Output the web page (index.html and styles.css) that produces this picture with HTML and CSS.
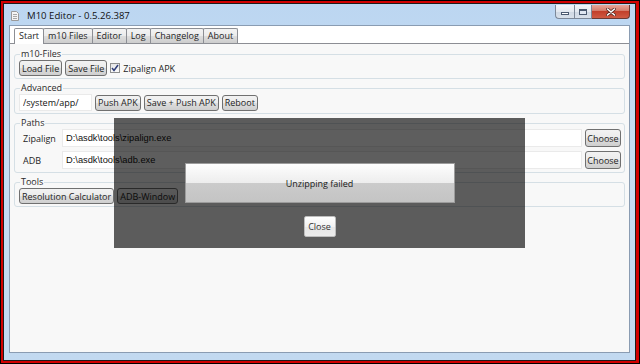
FILE: index.html
```html
<!DOCTYPE html>
<html lang="en">
<head>
    <meta charset="UTF-8">
    <meta name="viewport" content="width=device-width, initial-scale=1.0">
    <title>M10 Editor - 0.5.26.387</title>
    <link rel="stylesheet" href="styles.css">
</head>
<body>

<div class="screen">
    <div class="bezel">
        <div class="window">

            <!-- Barra de título -->
            <div class="titlebar">
                <svg class="app-icon" width="8" height="10" viewBox="0 0 8 10">
                    <path d="M0.5 0.5 H5.5 L7.5 2.5 V9.5 H0.5 Z" fill="#f4f4f4" stroke="#9a9a9a"/>
                    <path d="M2 3.5 H6 M2 5.5 H6 M2 7.5 H6" stroke="#a8a8a8"/>
                </svg>
                <span class="title">M10 Editor - 0.5.26.387</span>
                <div class="caption-buttons">
                    <span class="cap cap-min"><i></i></span>
                    <span class="cap cap-max"><i></i></span>
                    <span class="cap cap-close">
                        <svg width="10" height="8" viewBox="0 0 10 8">
                            <path d="M1.5 1 L8.5 7 M8.5 1 L1.5 7" stroke="#5b2a22" stroke-width="3" stroke-linecap="round"/>
                            <path d="M1.5 1 L8.5 7 M8.5 1 L1.5 7" stroke="#fff" stroke-width="1.6" stroke-linecap="round"/>
                        </svg>
                    </span>
                </div>
            </div>

            <div class="client">
                <div class="tabs">
                    <span class="tab active">Start</span>
                    <span class="tab">m10 Files</span>
                    <span class="tab">Editor</span>
                    <span class="tab">Log</span>
                    <span class="tab">Changelog</span>
                    <span class="tab">About</span>
                </div>

                <div class="tab-pane">
                    <fieldset class="group">
                        <legend>m10-Files</legend>
                        <div class="row">
                            <button class="btn">Load File</button>
                            <button class="btn">Save File</button>
                            <label class="check">
                                <span class="check-box">
                                    <svg width="8" height="8" viewBox="0 0 8 8">
                                        <path d="M1 4 L3 6.5 L7 1" fill="none" stroke="#2f3d78" stroke-width="1.5"/>
                                    </svg>
                                </span>
                                Zipalign APK
                            </label>
                        </div>
                    </fieldset>

                    <fieldset class="group">
                        <legend>Advanced</legend>
                        <div class="row">
                            <input class="field field-short" type="text" value="/system/app/">
                            <button class="btn">Push APK</button>
                            <button class="btn">Save + Push APK</button>
                            <button class="btn">Reboot</button>
                        </div>
                    </fieldset>

                    <fieldset class="group">
                        <legend>Paths</legend>
                        <div class="path-row">
                            <span class="path-label">Zipalign</span>
                            <input class="field field-path" type="text" value="D:\asdk\tools\zipalign.exe">
                            <button class="btn btn-choose">Choose</button>
                        </div>
                        <div class="path-row">
                            <span class="path-label">ADB</span>
                            <input class="field field-path" type="text" value="D:\asdk\tools\adb.exe">
                            <button class="btn btn-choose">Choose</button>
                        </div>
                    </fieldset>

                    <fieldset class="group">
                        <legend>Tools</legend>
                        <div class="row">
                            <button class="btn">Resolution Calculator</button>
                            <button class="btn">ADB-Window</button>
                        </div>
                    </fieldset>

                    <!-- Diálogo de error sobre el contenido -->
                    <div class="overlay">
                        <div class="message">Unzipping failed</div>
                        <button class="close-btn">Close</button>
                    </div>
                </div>
            </div>

        </div>
    </div>
</div>

</body>
</html>
```

FILE: styles.css
```css
* {
    box-sizing: border-box;
}

body {
    margin: 0;
    background: #000;
    font-family: "Open Sans", sans-serif;
    font-size: 9px;
    color: #1e1e1e;
}

/* Marco exterior */
.screen {
    width: 640px;
    height: 364px;
    border: 1px solid #000;
    background: #000;
}

.bezel {
    height: 100%;
    border: 2px solid #d20000;
    border-right-width: 3px;
}

.window {
    height: 100%;
    border: 1px solid #1c1c1c;
    background: linear-gradient(#bcd6f1, #c6ddf3 40%, #c2d9f0);
    display: flex;
    flex-direction: column;
    padding: 0 5px 7px 5px;
}

/* Barra de título */
.titlebar {
    height: 21px;
    display: flex;
    align-items: center;
    padding-left: 2px;
}

.app-icon {
    margin-top: 2px;
}

.title {
    margin-left: 8px;
    margin-top: 1px;
    font-size: 9.6px;
    color: #111;
}

.caption-buttons {
    margin-left: auto;
    align-self: flex-start;
    margin-top: 1px;
    display: flex;
    height: 14px;
}

.cap {
    display: flex;
    align-items: center;
    justify-content: center;
    height: 14px;
    border: 1px solid #7c8898;
    border-top: none;
    background: linear-gradient(#f2f5f9, #e2e8ef 50%, #cfd8e3 51%, #d9e1ea);
}

.cap-min {
    width: 19px;
    border-radius: 0 0 0 4px;
    border-right: none;
}

.cap-min i {
    width: 8px;
    height: 3px;
    margin-top: 4px;
    background: #fff;
    border: 1px solid #4b5a70;
}

.cap-max {
    width: 18px;
}

.cap-max i {
    width: 8px;
    height: 6px;
    border: 1px solid #4b5a70;
    border-top-width: 2px;
    background: #dfe7f1;
}

.cap-close {
    width: 38px;
    border-left: none;
    border-color: #6b3a33;
    border-radius: 0 0 4px 0;
    background: linear-gradient(#e8a799, #d47b69 45%, #c2402b 50%, #cf5a43);
}

/* Área de cliente */
.client {
    flex: 1;
    border: 1px solid #8a9cb2;
    background: #fff;
    display: flex;
    flex-direction: column;
}

.tabs {
    display: flex;
    align-items: flex-end;
    padding: 1px 0 0 4px;
    height: 17px;
}

.tab {
    height: 15px;
    line-height: 13px;
    padding: 0 4px;
    border: 1px solid #8c8e94;
    border-bottom: none;
    margin-right: -1px;
    border-radius: 2px 2px 0 0;
    background: linear-gradient(#f3f3f3, #ebebeb 50%, #dddddd 51%, #cdcdcd);
}

.tab.active {
    background: #fff;
    height: 16px;
    position: relative;
    z-index: 1;
    margin-bottom: -1px;
}

.tab-pane {
    flex: 1;
    position: relative;
    background: #f8f8f8;
    border-top: 1px solid #8c8e94;
    padding: 4px 4px 0 4px;
}

/* Grupos */
.group {
    margin: 0 0 3px 0;
    padding: 0 3px 2px 4px;
    border: 1px solid #d5dfe5;
    border-radius: 3px;
    min-width: 0;
}

.group legend {
    padding: 0 1px;
    margin-left: 1px;
    line-height: 12px;
    color: #2a2a2a;
}

.row {
    display: flex;
    align-items: center;
    gap: 3px;
}

.btn {
    height: 16px;
    padding: 0 2px;
    border: 1px solid #707070;
    border-radius: 3px;
    font-family: "Open Sans", sans-serif;
    font-size: 9px;
    line-height: 13px;
    color: #1e1e1e;
    background: linear-gradient(#f2f2f2, #ebebeb 50%, #dddddd 51%, #cfcfcf);
}

.check {
    display: flex;
    align-items: center;
    gap: 3px;
}

.check-box {
    width: 10px;
    height: 10px;
    border: 1px solid #8e8f8f;
    background: linear-gradient(#e6e6e6, #fafafa);
    display: flex;
    align-items: center;
    justify-content: center;
}

.field {
    height: 17px;
    border: 1px solid #eaeaea;
    background: #fff;
    padding: 0 3px;
    font-family: "Liberation Sans", sans-serif;
    font-size: 9.3px;
    color: #111;
    outline: none;
}

.field-short {
    width: 73px;
    font-family: "Open Sans", sans-serif;
    font-size: 9px;
}

.path-row {
    display: flex;
    align-items: center;
    margin-bottom: 4px;
}

.path-row:last-child {
    margin-bottom: 1px;
}

.path-label {
    width: 43px;
    padding-left: 4px;
}

.field-path {
    flex: 1;
    height: 18px;
}

.btn-choose {
    height: 18px;
    width: 36px;
    padding: 0;
    margin-left: 3px;
}

/* Diálogo */
.overlay {
    position: absolute;
    left: 104px;
    top: 74px;
    width: 411px;
    height: 130px;
    background: rgba(0, 0, 0, 0.63);
    display: flex;
    flex-direction: column;
    align-items: center;
}

.message {
    margin-top: 45px;
    width: 270px;
    height: 40px;
    border: 1px solid #9c9c9c;
    background: linear-gradient(#fdfdfd, #ededed 50%, #cbcbcb 51%, #c4c4c4);
    display: flex;
    align-items: center;
    justify-content: center;
    color: #1a1a1a;
}

.close-btn {
    margin-top: 13px;
    width: 32px;
    height: 21px;
    padding: 0;
    border: 1px solid #bdbdbd;
    border-radius: 2px;
    font-family: "Open Sans", sans-serif;
    font-size: 9px;
    color: #333;
    background: linear-gradient(#fefefe, #f1f1f1 50%, #e6e6e6 51%, #ececec);
}
```
